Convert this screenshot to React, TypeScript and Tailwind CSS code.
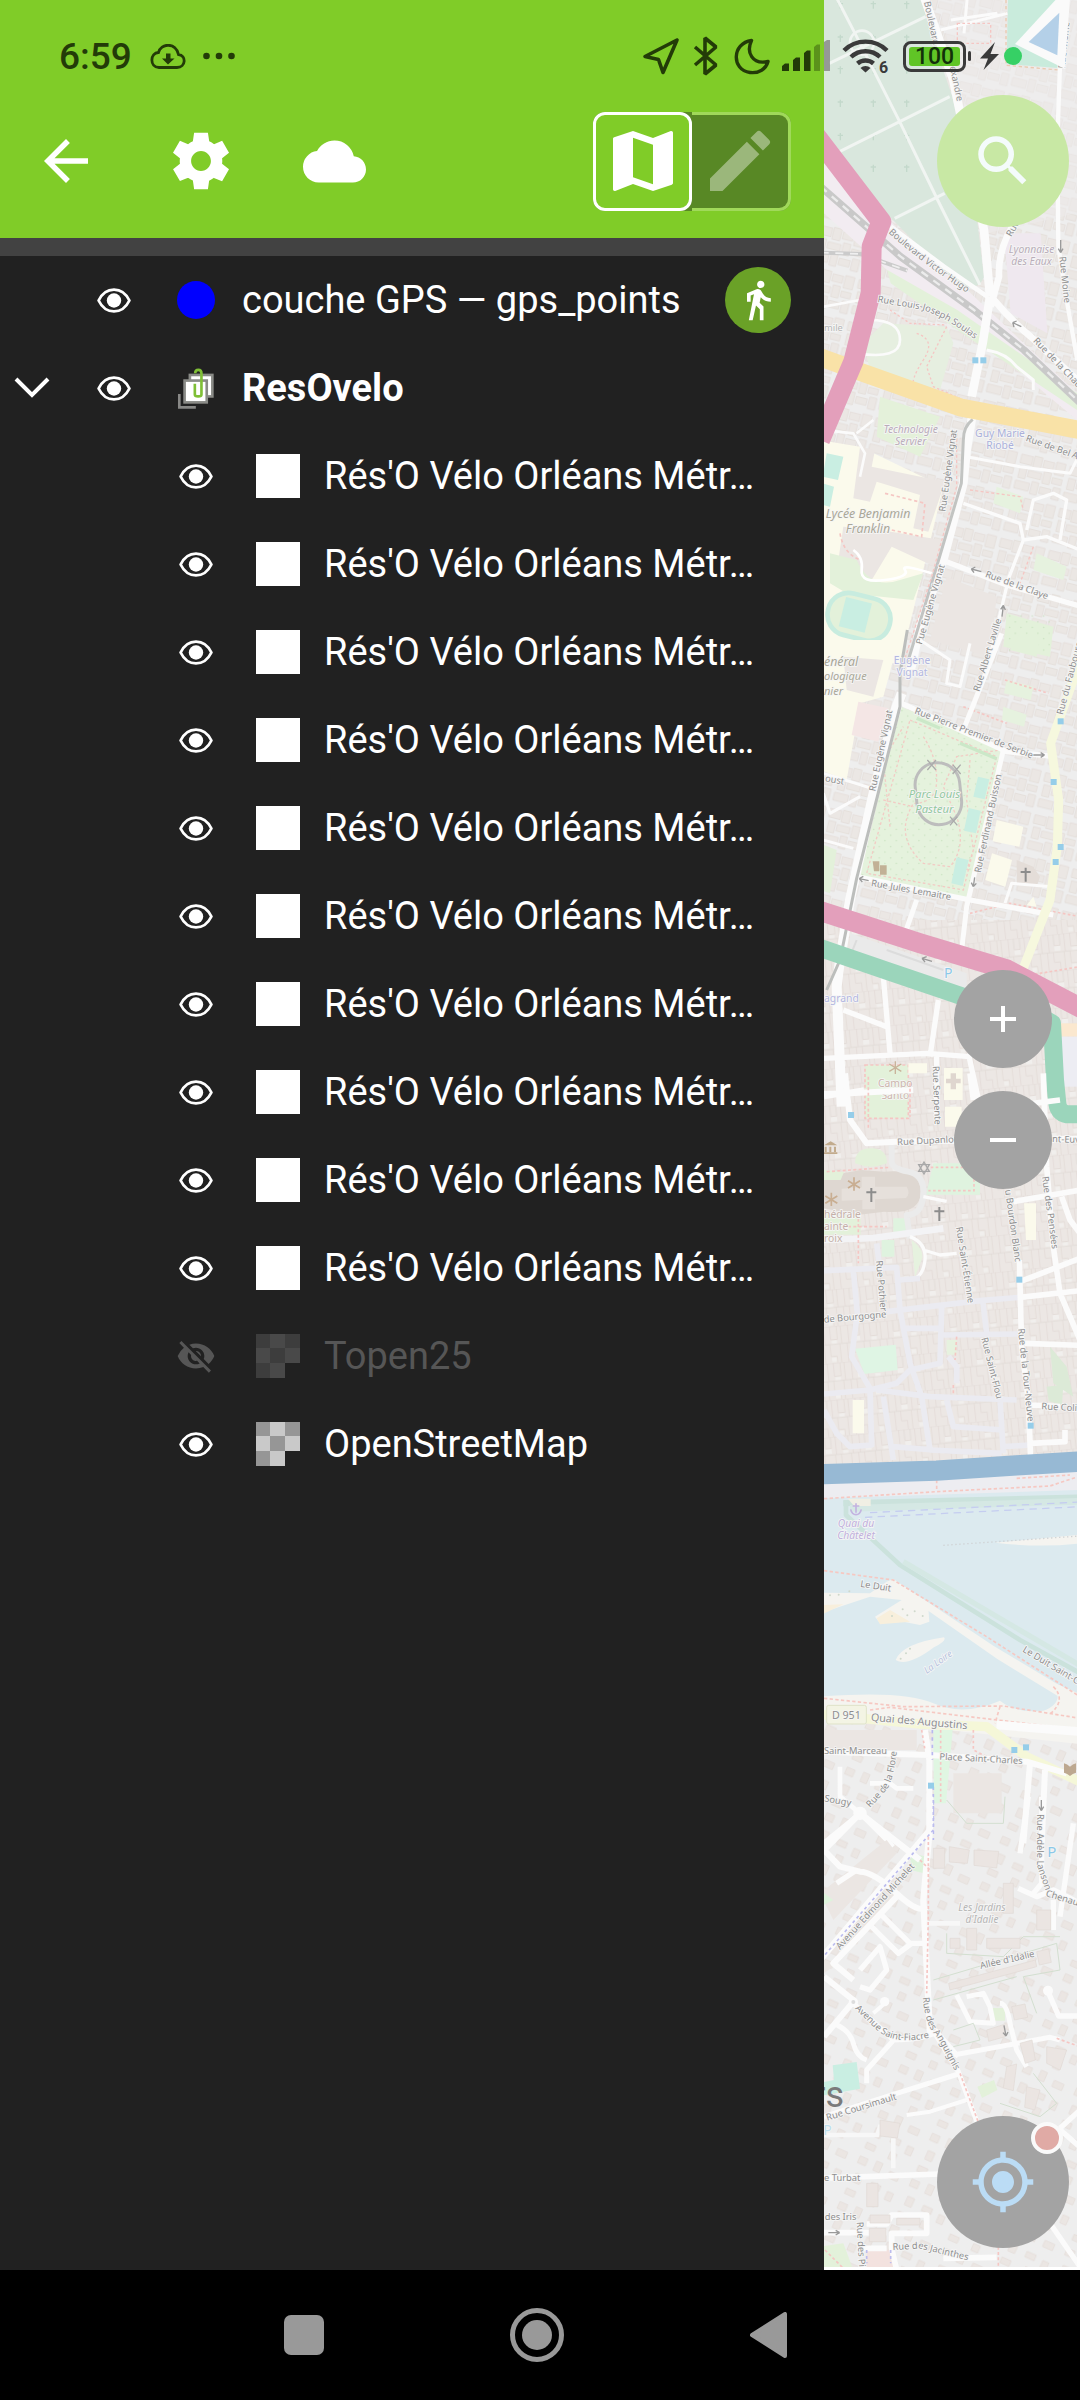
import React from "react";
import { MdArrowBack, MdCloud, MdMap, MdEdit, MdSearch, MdGpsFixed, MdDirectionsWalk, MdVisibilityOff } from "react-icons/md";

/* ---------- small icons ---------- */

function GearIcon() {
  return (
    <svg viewBox="0 0 24 24" className="size-[68px] fill-white" aria-hidden="true">
      <path d="M19.44 12.99l-.01.02c.04-.33.08-.67.08-1.01 0-.34-.03-.66-.07-.99l.01.02 2.44-1.92-2.43-4.22-2.87 1.16.01.01c-.52-.4-1.09-.74-1.71-1h.01L14.44 2H9.57l-.44 3.07h.01c-.62.26-1.19.6-1.71 1l.01-.01-2.88-1.17-2.44 4.22 2.44 1.92.01-.02c-.04.33-.07.65-.07.99 0 .34.03.68.08 1.01l-.01-.02-2.1 1.65-.33.26 2.43 4.2 2.88-1.15-.02-.04c.53.41 1.1.75 1.73 1.01h-.03L9.58 22h4.85s.03-.18.06-.42l.38-2.65h-.01c.62-.26 1.2-.6 1.73-1.01l-.02.04 2.88 1.15 2.43-4.2s-.14-.12-.33-.26l-2.11-1.66zM12 15.5c-1.93 0-3.5-1.57-3.5-3.5s1.57-3.5 3.5-3.5 3.5 1.57 3.5 3.5-1.57 3.5-3.5 3.5z" />
    </svg>
  );
}

function EyeIcon() {
  return (
    <svg viewBox="0 0 34 25" className="h-[25px] w-[34px]" aria-hidden="true">
      <path
        d="M1.6 12.5C5 5.500 10.500 1.600 17 1.600S29 5.500 32.400 12.500C29 19.500 23.500 23.400 17 23.400S5 19.500 1.600 12.500Z"
        fill="none"
        stroke="#fff"
        strokeWidth="2.8"
        strokeLinejoin="round"
      />
      <circle cx="17" cy="12.5" r="7.200" fill="#fff" />
    </svg>
  );
}

function GroupIcon() {
  return (
    <svg viewBox="525 405 115 130" className="h-[43px] w-[38px]" aria-hidden="true">
      <path d="M532 487v40h50" fill="none" stroke="#888886" strokeWidth="8" />
      <rect x="564" y="429" width="68" height="65" fill="#fff" stroke="#8a8b87" strokeWidth="8" />
      <rect x="548" y="446" width="67" height="66" fill="#fff" stroke="#8a8b87" strokeWidth="8" />
      <path
        d="M580 424c0-14 19-14 19 0v64c0 8-20 8-20 0v-32"
        fill="none"
        stroke="#7fbf36"
        strokeWidth="8"
      />
    </svg>
  );
}

function Checker({ dim }: { dim?: boolean }) {
  const dark = dim ? "#3d3d3d" : "#969696";
  const light = dim ? "#494949" : "#c9c9c9";
  return (
    <svg viewBox="0 0 44 44" className="size-11" aria-hidden="true">
      <path fill={dark} d="M0 0h14v14H0zM29 0h15v14H29zM14 14h15v15H14zM0 29h14v15H0z" />
      <path fill={light} d="M14 0h15v14H14zM0 14h14v15H0zM29 14h15v15H29zM14 29h15v15H14z" />
    </svg>
  );
}

/* ---------- status bar ---------- */

function StatusBar() {
  return (
    <div className="absolute inset-x-0 top-0 z-20 flex h-[112px] items-center pl-[59px] text-[#233b08]">
      <span className="text-[37px] leading-none font-medium">6:59</span>
      <svg viewBox="0 0 36 25" className="ml-[18px] h-[25px] w-9" aria-hidden="true">
        <path
          d="M9 23.500h18c9 0 9.500-12 1.500-13C26-2 10.500-1 8.500 8.500 0 9-.8 23 9 23.500Z"
          fill="none"
          stroke="currentColor"
          strokeWidth="2.800"
        />
        <path d="M16 9.500h4.500v5h4L18 20.500l-6-6h4z" fill="currentColor" />
      </svg>
      <svg viewBox="0 0 34 8" className="ml-4 h-2 w-[34px]" fill="currentColor" aria-hidden="true">
        <circle cx="4.500" cy="4" r="3.300" />
        <circle cx="17" cy="4" r="3.300" />
        <circle cx="29.500" cy="4" r="3.300" />
      </svg>
      <div className="ml-auto flex items-center pr-[58px]">
        <svg viewBox="0 0 38 38" className="size-[38px]" fill="none" stroke="currentColor" strokeWidth="3.600" strokeLinejoin="round" aria-hidden="true">
          <path d="M35 3 3 19.500l13.500 3 4.500 13z" />
        </svg>
        <svg viewBox="0 0 26 40" className="ml-[13px] h-10 w-[26px]" fill="none" stroke="currentColor" strokeWidth="3.600" strokeLinejoin="bevel" aria-hidden="true">
          <path d="M2 11l21 18-11 9V2l11 9L2 29" />
        </svg>
        <svg viewBox="0 0 36 37" className="ml-[15px] h-[37px] w-9" fill="none" stroke="currentColor" strokeWidth="3.400" strokeLinejoin="round" aria-hidden="true">
          <path d="M17.500 2.500C-2 5-3 32 16 34.500 25 35.500 32 31 34 23.500 18 27 12 14 17.500 2.500Z" />
        </svg>
        <svg viewBox="0 0 48 32" className="ml-3 h-8 w-12" aria-hidden="true">
          <path fill="currentColor" d="M0 26l3-2.500h4V31H0zM11 20l3-2.500h4V31h-7zM22 13l3-2.500h3.500V31H22z" />
          <path fill="currentColor" opacity=".4" d="M32 7l3-2.500h3V31h-6z" />
          <path fill="#777" opacity=".7" d="M42 2l3-2h3v31h-6z" />
        </svg>
        <svg viewBox="0 0 48 36" className="ml-3 h-9 w-12" fill="none" stroke="#3a3a3a" strokeWidth="4.400" aria-hidden="true">
          <path d="M2 12.500a30.500 30.500 0 0 1 43 0M9 19a21 21 0 0 1 29 0M15.500 25.500a12 12 0 0 1 16 0" />
          <path d="M18.500 30a7 7 0 0 1 10 0l-5 4.500z" fill="#3a3a3a" stroke="none" />
          <text x="37" y="35" fontSize="16" fontWeight="700" fill="#3a3a3a" stroke="none">6</text>
        </svg>
        <span className="ml-[13px] flex h-[31px] w-[63px] items-center justify-center rounded-lg border-[3px] border-[#3a3a3a] p-[3px]">
          <span className="flex h-full w-full items-center justify-center rounded-[3px] bg-[#60c526] text-[23px] leading-none font-medium text-[#12300a]">
            100
          </span>
        </span>
        <span className="ml-[2px] h-[10px] w-[3px] rounded-full bg-[#3a3a3a]" />
        <svg viewBox="0 0 20 28" className="ml-[8px] h-7 w-5" aria-hidden="true">
          <path d="M16 0 1 16.500h8L4.500 28 20 12h-8.500z" fill="#3a3a3a" />
        </svg>
        <span className="ml-[5px] size-[18px] rounded-full bg-[#36d065]" />
      </div>
    </div>
  );
}

/* ---------- layer drawer ---------- */

type Layer = {
  name: string;
  nested?: boolean;
  group?: boolean;
  hidden?: boolean;
  tracked?: boolean;
  symbol: "dot" | "group" | "square" | "raster";
};

const layers: Layer[] = [
  { name: "couche GPS — gps_points", symbol: "dot", tracked: true },
  { name: "ResOvelo", symbol: "group", group: true },
  ...Array.from({ length: 10 }, (): Layer => ({ name: "Rés'O Vélo Orléans Métr…", symbol: "square", nested: true })),
  { name: "Topen25", symbol: "raster", nested: true, hidden: true },
  { name: "OpenStreetMap", symbol: "raster", nested: true },
];

function LayerRow({ layer }: { layer: Layer }) {
  return (
    <li className={layer.nested ? "flex h-[88px] items-center pr-[33px] pl-[82px]" : "flex h-[88px] items-center pr-[33px]"}>
      <span className="mr-[18px] flex w-16 shrink-0 justify-center">
        {layer.group && (
          <button type="button" aria-label="Replier le groupe">
            <svg viewBox="0 0 36 22" className="h-[22px] w-9" fill="none" stroke="#fff" strokeWidth="4" aria-hidden="true">
              <path d="M2 2l16 16L34 2" />
            </svg>
          </button>
        )}
      </span>
      <button type="button" aria-label={"Visibilité " + layer.name} className="flex w-16 shrink-0 justify-center">
        {layer.hidden ? <MdVisibilityOff className="size-10 text-[#565656]" /> : <EyeIcon />}
      </button>
      <span className="ml-7 flex size-11 shrink-0 items-center justify-center">
        {layer.symbol === "dot" && <span className="size-[38px] rounded-full bg-[#0000ff]" />}
        {layer.symbol === "group" && <GroupIcon />}
        {layer.symbol === "square" && <span className="size-11 bg-white" />}
        {layer.symbol === "raster" && <Checker dim={layer.hidden} />}
      </span>
      <span
        className={
          layer.group
            ? "ml-6 min-w-0 flex-1 truncate text-[38px] leading-[48px] font-bold text-white"
            : layer.hidden
              ? "ml-6 min-w-0 flex-1 truncate text-[38px] leading-[48px] text-[#565656]"
              : "ml-6 min-w-0 flex-1 truncate text-[38px] leading-[48px] text-white"
        }
      >
        {layer.name}
      </span>
      {layer.tracked && (
        <button type="button" aria-label="Suivi de position" className="flex size-[66px] shrink-0 items-center justify-center rounded-full bg-[#6aa127]">
          <MdDirectionsWalk className="size-11 text-white" />
        </button>
      )}
    </li>
  );
}

function Drawer() {
  return (
    <aside className="flex min-w-0 flex-1 flex-col bg-[#212121]">
      <header className="bg-[#80cc28] pt-[84px]">
        <div className="flex h-[154px] items-center gap-[68px] pr-[33px] pl-[33px]">
          <button type="button" aria-label="Retour"><MdArrowBack className="size-[66px] text-white" /></button>
          <button type="button" aria-label="Paramètres"><GearIcon /></button>
          <button type="button" aria-label="Nuage"><MdCloud className="size-[63px] text-white" /></button>
          <div className="ml-auto flex h-[99px] w-[198px] rounded-xl bg-[#588825]">
            <button type="button" aria-label="Mode carte" aria-pressed="true" className="flex w-1/2 items-center justify-center rounded-xl border-[3px] border-white bg-[#80cc28]">
              <MdMap className="size-20 text-white" />
            </button>
            <button type="button" aria-label="Mode édition" aria-pressed="false" className="flex w-1/2 items-center justify-center rounded-r-xl border-y-[3px] border-r-[3px] border-[#a0d95a]">
              <MdEdit className="size-20 text-[#9bb77b]" />
            </button>
          </div>
        </div>
      </header>
      <div className="h-[18px] bg-[#424242]" />
      <ul>
        {layers.map((layer, i) => (
          <LayerRow key={i} layer={layer} />
        ))}
      </ul>
    </aside>
  );
}

/* ---------- map ---------- */

type RoadProps = { d: string; w?: number; c?: string; dash?: string; o?: number };
function Road({ d, w = 14, c = "#fbfbfb", dash, o }: RoadProps) {
  return <path d={d} fill="none" stroke={c} strokeWidth={w} strokeDasharray={dash} opacity={o} strokeLinejoin="round" />;
}

type LabelProps = { x: number; y: number; r?: number; c?: string; s?: number; i?: boolean; a?: "start" | "middle"; children: string };
function Label({ x, y, r = 0, c = "#8e8e8e", s = 28, i, a = "start", children }: LabelProps) {
  return (
    <text
      transform={`translate(${x} ${y}) rotate(${r})`}
      fontSize={s}
      fill={c}
      textAnchor={a}
      fontStyle={i ? "italic" : undefined}
      stroke="#f6f6f6"
      strokeWidth="5"
      paintOrder="stroke"
    >
      {children}
    </text>
  );
}

function CurvedLabel({ id, d, children }: { id: string; d: string; children: string }) {
  return (
    <>
      <path id={id} d={d} fill="none" />
      <text fontSize="28" fill="#8e8e8e" stroke="#f6f6f6" strokeWidth="5" paintOrder="stroke">
        <textPath href={"#" + id}>{children}</textPath>
      </text>
    </>
  );
}

function Stops({ at }: { at: number[][] }) {
  return (
    <>
      {at.map(([x, y]) => (
        <rect key={x + "-" + y} x={x - 9} y={y - 9} width="18" height="18" fill="#95cde9" />
      ))}
    </>
  );
}

function Church({ x, y }: { x: number; y: number }) {
  return <path d={`M${x} ${y - 21}v42M${x - 15} ${y - 8}h30`} stroke="#8c8c8c" strokeWidth="6" />;
}

const graves = [49, 148, 248].flatMap((x) => [15, 115, 210, 310, 410, 505].map((y) => [x, y]));

function CityMap() {
  const path = "#f5c6c3";
  return (
    <svg viewBox="0 0 759 6801" preserveAspectRatio="xMinYMin slice" className="absolute inset-0 h-full w-full font-['Noto_Sans',sans-serif]" aria-label="Carte d'Orléans">
      <defs>
        <pattern id="blocks" width="150" height="130" patternUnits="userSpaceOnUse" patternTransform="rotate(14)">
          <g fill="#ebe7e4" stroke="#e1dad5" strokeWidth="2">
            <path d="M6 8h36v26H6zM46 4h24v36H46zM76 10h32v22H76zM114 6h28v38h-28zM10 44h22v34H10zM38 50h40v20H38zM84 42h22v36H84zM112 54h30v18h-30zM6 88h44v24H6zM56 80h20v38H56zM82 90h34v20H82zM122 82h22v36h-22z" />
          </g>
        </pattern>
        <pattern id="dense" width="120" height="110" patternUnits="userSpaceOnUse" patternTransform="rotate(-6)">
          <rect width="120" height="110" fill="#ece7e4" />
          <g fill="none" stroke="#dfd8d3" strokeWidth="2">
            <path d="M0 0h120M0 54h120M14 0v54M30 0v34h18V0M62 0v54M80 0v40h20V0M112 0v54M8 54v56M26 54v30h18v26M58 54v56M76 54v36h18v20M106 54v56" />
          </g>
          <path d="M30 36h18v14H30zM82 42h16v10H82zM78 94h14v12H78z" fill="#f1efed" />
        </pattern>
        <pattern id="villas" width="170" height="150" patternUnits="userSpaceOnUse" patternTransform="rotate(24)">
          <path d="M10 14h26v22H10zM62 8h20v30H62zM110 20h32v20h-32zM20 66h22v28H20zM74 72h30v18H74zM128 78h20v26h-20zM12 118h30v18H12zM88 116h22v22H88z" fill="#ebe6e3" stroke="#e2dbd6" strokeWidth="2" />
        </pattern>
        <pattern id="dots" width="34" height="34" patternUnits="userSpaceOnUse">
          <circle cx="8" cy="8" r="2" fill="#c3dfba" />
          <circle cx="25" cy="24" r="2" fill="#c3dfba" />
        </pattern>
      </defs>

      <rect width="759" height="6801" fill="#eeeeee" />
      <rect width="759" height="2760" fill="url(#blocks)" />
      <rect y="2760" width="759" height="1640" fill="url(#dense)" />
      <rect y="5160" width="759" height="1641" fill="url(#villas)" />

      {/* cemetery and railway */}
      <g>
        <path d="M340 0h419v640l-270 60-80-420z" fill="#eeecec" opacity=".5" />
        <path d="M0 430 215 680 440 880 759 1180V1260L400 960 200 820 0 640z" fill="#f2ecf1" />
        <path d="M540 700h110l20 300-110-60z" fill="#efe8ef" />
        <path d="M0-10h290l40 140 55 160 55 230 18 130 22 180q-14 40-56 28l-60-40L212 665 0 430z" fill="#d9e7dd" />
        {graves.map(([x, y]) => (
          <path key={x + "-" + y} d={`M${x} ${y - 11}v22M${x - 8} ${y - 4}h16`} stroke="#c3d9cb" strokeWidth="4" />
        ))}
        <Road d="M36-10 93 100l134 265 114 235 127 255M36 460l191-95 150-75M16 190 305 50M212 655l150-75" w={9} c="#f1f5f2" />
        <circle cx="114" cy="128" r="36" fill="none" stroke="#f1f5f2" strokeWidth="8" />
        <path d="M552-10h180l-10 190-20 24-154-12z" fill="#c9ebdc" />
        <path d="M546 0v196l160 14" fill="none" stroke="#eac9b0" strokeWidth="4" strokeDasharray="10 8" />
        <Road d="M350 90l200-50M420 100l10-110M380 60l140-20" w={9} />
        <path d="M400 70h100v60H400z" fill="none" stroke={path} strokeWidth="4" strokeDasharray="8 7" />
        <path d="M190 810 400 930 759 1180v50L430 1010 200 850z" fill="#e3f1da" />
        <Road d="M-10 560 230 770 450 930 600 1050 770 1210" w={22} c="#c9c9c9" />
        <Road d="M-10 560 230 770 450 930 600 1050 770 1210" w={7} c="#ececec" dash="24 20" />
        <Road d="M-10 758 110 762 250 812" w={12} c="#cbcbcb" />
        <Road d="M-10 758 110 762 250 812" w={5} c="#efefef" dash="24 20" />
        <Road d="M300-10 388 240 480 690 498 890" w={26} />
        <Road d="M200 680 360 800 490 890" w={14} />
        <Road d="M640 590Q520 700 525 830L500 920M510 900Q560 960 620 1010L770 1150" w={20} />
        <Road d="M715 0 700 420 703 740 728 900 760 1080" w={13} />
        <Label x={300} y={6} r={78}>Boulevard</Label>
        <Label x={372} y={176} r={78}>Alexandre</Label>
        <Label x={722} y={206} r={-84}>Rue Moine</Label>
      </g>

      {/* parks and schools of the northern district */}
      <g transform="translate(-12 600)">
        <path d="M130 430l60-60 190 10 20 50-40 140-210-60z" fill="#e6efe0" />
        <path d="M210 330l60 40 110 5M290 400q60 20 20 80t-30 90M380 380l-60 120 20 60 90 40" fill="none" stroke={path} strokeWidth="4" strokeDasharray="7 7" />
        <path d="M180 590l180 60-60 120-130-60z" fill="#e4f1da" />
        <path d="M0 720l120 20 250 120-70 290-60 240H0z" fill="#fbfaec" />
        <path d="M120 740l45 10-10 50 220 45-50 150-45-10 20-100-130-40-20 60-50-10z" fill="#ebe6e3" />
        <path d="M70 980l110 10 185 30-20 80-130-60-60 100-100-60z" fill="#ebe6e3" />
        <path d="M30 1060l80 20q40 90 130 60l70-20-30 80-200-20-50-30z" fill="#e3f1da" />
        <path d="M195 880l120 30-10 100-90-20M60 1000q10 60 60 80" fill="none" stroke={path} strokeWidth="5" strokeDasharray="10 8" />
        <path d="M100 1050q30 20 25 60t70 30 60-30 80 10" fill="none" stroke="#fff" strokeWidth="8" />
        <g transform="rotate(14 115 1250)">
          <rect x="22" y="1186" width="190" height="128" rx="62" fill="#e3f1da" stroke="#c8ecdf" strokeWidth="14" />
          <rect x="65" y="1202" width="80" height="90" fill="#c9eee2" />
        </g>
        <path d="M20 760l50 10-16 70-46-10zM8 850l34 10-12 60-26-6z" fill="#c9eee2" />
        <path d="M560 1240l140 40-10 90-140-30z" fill="#e3f1da" />
        <rect x="560" y="1240" width="130" height="120" fill="url(#dots)" />
        <path d="M380 1130l150 60-20 180-180-50z" fill="#ebe6e3" />
        <path d="M530 860l80 30-10 50-80-30zM650 1060l90 40-10 40-90-30z" fill="#e6f2df" />
        <Road d="M10 320l110-20M110 460q130 20 130-40t-90-60" w={8} />
        <Road d="M10 690l90 10 35 60-15 70M160 660l-50 40" w={8} />
        <Road d="M380 1085l180 70 225 65" w={16} />
        <Road d="M560 1160l-50 210M610 1020l-50 130M430 910l170 60 10 50 70-10 100 40M620 990l20-90 60-20 40 20-20 120" w={10} />
        <Road d="M500 450q60 10 90 50l50 40v30M440 770l160 30 150 20 30-60" w={9} />
        <Road d="M510 290 488 430 455 590M458 640 440 750 430 850 370 1080 300 1280 270 1420" w={26} />
        <Road d="M458 658Q430 680 430 720L424 850 350 1100 262 1390" w={9} c="#c2c4c2" />
        <path d="M410 700v160L335 1130 250 1390" fill="none" stroke={path} strokeWidth="4" strokeDasharray="9 7" />
        <path d="M450 870l150 20 10 40M640 1040l-40 110" fill="none" stroke={path} strokeWidth="4" strokeDasharray="9 7" />
        <Road d="M-10 468 120 515 420 622 600 656 790 692" w={54} c="#f9e2a7" />
        <Stops at={[[466, 481], [490, 481]]} />
      </g>
      <Road d="M-30 400 172 665 143 740 140 880 88 1085-12 1320" w={60} c="#e39fbb" />
      <g transform="translate(-12 600)">
        <CurvedLabel id="hugo" d="M205 98Q300 185 450 285">Boulevard Victor Hugo</CurvedLabel>
        <CurvedLabel id="soulas" d="M172 306 300 328Q370 345 480 430">Rue Louis-Joseph Soulas</CurvedLabel>
        <Label x={12} y={394} c="#b5b5b5">mile</Label>
        <Label x={566} y={158} i c="#b9adb9" s={31}>Lyonnaise</Label>
        <Label x={574} y={194} i c="#b9adb9" s={31}>des Eaux</Label>
        <Label x={718} y={170} r={84}>Rue Moine</Label>
        <Label x={574} y={112} r={-60}>Rue</Label>
        <Label x={638} y={424} r={46}>Rue de la Chaude</Label>
        <Label x={272} y={698} a="middle" i c="#b9adb9" s={31}>Technologie</Label>
        <Label x={272} y={734} a="middle" i c="#b9adb9" s={31}>Servier</Label>
        <Label x={540} y={710} a="middle" c="#aab0da" s={31}>Guy Marie</Label>
        <Label x={540} y={746} a="middle" c="#aab0da" s={31}>Riobé</Label>
        <Label x={616} y={722} r={20}>Rue de Bel Air</Label>
        <Label x={376} y={936} r={-82}>Rue Eugène Vignat</Label>
        <Label x={144} y={955} a="middle" i c="#aaa898" s={37}>Lycée Benjamin</Label>
        <Label x={144} y={998} a="middle" i c="#aaa898" s={37}>Franklin</Label>
        <Label x={306} y={1335} r={-74}>Rue Eugène Vignat</Label>
        <Label x={494} y={1130} r={20}>Rue de la Claye</Label>
        <path d="M604 380l-26-12m0 0l12-5m-12 5l4 13M484 1115l-30-8m0 0l12-6m-12 6l8 11M546 1250l4-34m0 0l-8 12m8-12l6 14M722 120v38m0 0l-7-12m7 12l7-12" stroke="#9a9a9a" strokeWidth="4" fill="none" />
      </g>

      {/* park and inner boulevards */}
      <g transform="translate(-12 1920)">
        <path d="M0 0h190l40 20-40 150-70 20-40 230-80-30z" fill="#fbfaec" />
        <path d="M70 50l120 10-30 110-80-20z" fill="#ebe6e3" />
        <path d="M115 185l90 20-30 100-80-20z" fill="#f4e6e5" />
        <path d="M0 610l50 20-20 130-30-10z" fill="#e3f1da" />
        <path d="M243 200 548 328 440 772 118 712z" fill="#e5f2dd" />
        <path d="M243 200 548 328 440 772 118 712z" fill="url(#dots)" />
        <g fill="none" stroke="#f2cbc4" strokeWidth="4" strokeDasharray="8 7">
          <path d="M270 240l260 110-100 400-290-50zM310 290q40 60 40 130t-70 70q-60 100 30 180l80 10q50-60 20-150l-40-90 40-90 130-20M190 480l90 20M450 360l-10 120 20 150-20 60M210 560l-20-200 60-100" />
        </g>
        <g fill="none" stroke="#bdbdbd" strokeWidth="9">
          <rect x="288" y="368" width="134" height="186" rx="66" transform="rotate(-6 355 460)" />
        </g>
        <path d="M322 360l26 30m0-30l-26 30M398 374l24 28m0-28l-24 28M390 530l22 26m0-26l-22 26" stroke="#ababab" strokeWidth="4" />
        <path d="M474 410l34 8-14 60-34-8zM446 504l36 8-14 68-36-8zM410 652l36 8-18 78-34-8z" fill="#c9eee2" />
        <path d="M290 235l70 30M420 310l110 46" stroke="#cbe8c8" strokeWidth="10" />
        <path d="M530 540l80 20-12 60-80-16zM516 640l60 20-20 80-60-20zM640 770l10 30-30-4z" fill="#fbfaec" />
        <path d="M590 660l50 20 20 30-10 30-60-10z" fill="#e4ddd8" />
        <path d="M560 120l80 20-8 40-80-20z M550 200l70 24-8 36-66-20z" fill="#e6f2df" />
        <path d="M600-20l60 10-10 60-80-20z" fill="#e3f1da" />
        <Road d="M555 120l130 40M430 200l130 50M450 820l120-30 210 40M600 1010l180-30" w={5} c={path} dash="8 7" />
        <Road d="M245 190 420 270 560 335 690 348" w={16} />
        <Road d="M550 330 440 800 425 930M545-20 430 270M290 780 255 880" w={15} />
        <Road d="M120 712 450 780 700 825" w={16} />
        <Road d="M10 400l145 45M10 600l90 25M555 790l20-60 120 10M300 0l90 60-10 70 40 10 30-130M10 460l20 60 90-50" w={9} />
        <Road d="M245 160 230 200 165 440 90 780 60 960 50 1040 65 1400" w={30} />
        <Road d="M262-30 240 100V200L110 715 60 960 20 1050" w={9} c="#bcbebc" />
        <Road d="M792-20 760 120 692 310 716 480 712 620 690 780 600 1010" w={27} c="#f6f8de" />
        <path d="M90 880l350 120v60L90 960z" fill="#eaeaea" />
        <path d="M110 900l-20 50M200 930l170 60" stroke="#dcdcdc" strokeWidth="6" />
        <Road d="M70 1110 200 1160M190 1010l20 230M12 1255 320 1240 450 1250M355 1080 330 1250M445 1240 480 1400M12 1370l120-20M350 1250v180" w={16} />
        <path d="M135 1275h130v160H135z" fill="#e3f1da" stroke={path} strokeWidth="5" strokeDasharray="9 7" />
        <path d="M372 1284h56v96h-56zM265 1270h56v30h-56z" fill="#fbfaec" />
        <path d="M392 1300h16v16h14v14h-14v18h-16v-18h-14v-14h14z" fill="#dfd6cf" />
        <path d="M226 1264v38M208 1272l36 22M208 1294l36-22" stroke="#c9b39a" strokeWidth="4" />
        <path d="M720 1150h60v40h-60z" fill="#fbe8cf" />
        <path d="M720 1190h60v150h-60z" fill="#ededf3" />
        <Road d="M-10 920 200 992 430 1070 660 1130 696 1150 705 1320 712 1390Q716 1423 750 1423H790" w={54} c="#9bd5bb" />
        <Road d="M-10 810 300 910 560 988 790 1108" w={60} c="#e39fbb" />
        <Stops at={[[722, 244], [701, 426], [722, 621], [707, 666]]} />
        <Church x={617} y={704} />
        <g fill="#c2b196">
          <path d="M158 664h20v30h-16zM180 676h20v28h-20z" />
        </g>
        <Label x={12} y={77} i c="#aaa898" s={37}>énéral</Label>
        <Label x={12} y={120} i c="#aaa898" s={33}>ologique</Label>
        <Label x={12} y={164} i c="#aaa898" s={33}>nier</Label>
        <Label x={276} y={73} a="middle" c="#b3b7e0" s={31}>Eugène</Label>
        <Label x={276} y={109} a="middle" c="#b3b7e0" s={31}>Vignat</Label>
        <Label x={166} y={455} r={-78}>Rue Eugène Vignat</Label>
        <Label x={282} y={220} r={21}>Rue Pierre Premier de Serbie</Label>
        <Label x={478} y={156} r={-73}>Rue Albert Laville</Label>
        <Label x={482} y={700} r={-78}>Rue Ferdinand Buisson</Label>
        <Label x={728} y={226} r={-75}>Rue du Faubourg</Label>
        <Label x={343} y={474} a="middle" i c="#93c9a0" s={34}>Parc Louis</Label>
        <Label x={343} y={518} a="middle" i c="#93c9a0" s={34}>Pasteur</Label>
        <Label x={152} y={738} r={10}>Rue Jules Lemaitre</Label>
        <Label x={14} y={424} r={10}>oust</Label>
        <Label x={372} y={1014} c="#8cc8e8" s={42}>P</Label>
        <Label x={12} y={1087} c="#b3b7e0" s={31}>agrand</Label>
        <Label x={226} y={1341} a="middle" c="#cbb5ac" s={31}>Campo</Label>
        <Label x={226} y={1376} a="middle" c="#cbb5ac" s={31}>Santo</Label>
        <Label x={338} y={1278} r={88}>Rue Serpente</Label>
        <path d="M146 722l-28-6m0 0l12-7m-12 7l9 10M460 740l4-28m-4 28l-6-12m6 12l9-10M640 345h34m0 0l-12-7m12 7l-12 7M336 964l-30-9m0 0l14-5m-14 5l9 11" stroke="#9a9a9a" strokeWidth="4" fill="none" />
      </g>

      {/* cathedral district */}
      <g transform="translate(-12 3240)">
        <path d="M12 290l110-20 70 5q110-10 110 60t-110 60l-80 10-100-20z" fill="#ded7d1" />
        <path d="M65 326l60-4v-32h40v30l95 0q12 20-2 34l-93 4v30h-38v-28l-62 2z" fill="#e6e0db" />
        <path d="M105 250q0-45 48-45t48 45q-48 20-96 0zM12 270l60 6-10 24H12zM12 404h110v60H12z" fill="#e3f1da" />
        <path d="M340 250h140v94H318zM220 415h40v40h-40zM185 480h38v50h-38z" fill="#dff3df" />
        <path d="M332 262h130v70H325" fill="none" stroke={path} strokeWidth="5" strokeDasharray="8 7" />
        <path d="M375 80h50v60h-50zM612 370h36v110h-30zM98 960h34v100h-34z" fill="#fbfaec" />
        <path d="M105 806l122-12 6 76-100 12z" fill="#dff5e4" />
        <path d="M690 800l50 60 20 90-60-40zM680 920l50-6-4 60-40-10z" fill="#dcead7" />
        <path d="M380 780h30v44h-30zM275 480q40 30 30 60l-20 50z" fill="#e6f2df" />
        <Road d="M12 42 90 40 280 30M75-20 90 120 140 190 230 185 410 182 560 175M700 176h90" w={18} />
        <Road d="M215 195v50q0 20 50 30t45 70-50 60l10 70" w={18} c="#ebebeb" />
        <Road d="M12 480 160 474 370 445" w={20} c="#f3f3f5" />
        <Road d="M270 470q50 20 45 70t-40 60M310 510l50 15 50-5M310 350l70 14" w={10} />
        <g stroke="#ebebf1" strokeWidth="17" fill="none" strokeLinejoin="round">
          <path d="M12 572 230 562 240 690 270 850 305 950 330 1110 545 1120M100 570 112 700 95 830 150 925 155 1095 90 1100 50 1060 12 990M200 695 480 662 600 652M365 680 360 850 270 870 230 910 150 930 12 942M245 745 360 745M365 765 600 762M488 662 500 760M540 960 550 1120M170 930 330 950 590 960M190 950 220 1140M380 960 400 1040 550 1050M220 1100 340 1110M385 830 410 860V910M240 600 300 595M550 1100 630 1095" />
          <path d="M170 490 180 570" />
        </g>
        <Road d="M450-20 460 60M670-20 680 260 700 500 720 640 780 780M780 330 580 365M598 540 605 800 625 960 632 1140M600 605 780 535M600 652 780 632M615 790 780 796M725 350 750 420 780 460M632 975 720 980M632 1090 735 1085V1050M640 70l80-10" w={17} />
        <Road d="M20 275 210 262M115 400v150M145-10v160M270 10v100M20 440h180M400 915v30M410 770l-5 70" w={5} c={path} dash="9 7" />
        <path d="M312 246l16 28h-32zM312 282l-16-28h32z" fill="none" stroke="#a8a8a8" strokeWidth="4" />
        <Church x={154} y={345} />
        <Church x={358} y={402} />
        <path d="M102 292v40M84 302l36 22M84 324l36-22M34 338v40M16 348l36 22M16 370l36-22" stroke="#c9ae92" strokeWidth="5" />
        <path d="M12 196l20-12 20 12zM14 200h6v16h-6zM28 200h6v16h-6zM42 200h6v16h-6zM10 217h42v5H10z" fill="#c2ab8c" />
        <Stops at={[[93, 105], [598, 599], [632, 1037]]} />
        <Label x={232} y={196} r={-3}>Rue Dupanloup</Label>
        <Label x={696} y={186} r={2}>nt-Euverte</Label>
        <Label x={12} y={414} c="#c4b0a8" s={31}>hédrale</Label>
        <Label x={12} y={450} c="#c4b0a8" s={31}>ainte</Label>
        <Label x={12} y={486} c="#c4b0a8" s={31}>roix</Label>
        <Label x={408} y={442} r={81}>Rue Saint-Étienne</Label>
        <Label x={168} y={542} r={85}>Rue Pothier</Label>
        <Label x={555} y={330} r={82}>u Bourdon Blanc</Label>
        <Label x={666} y={290} r={82}>Rue des Pensées</Label>
        <Label x={12} y={728} r={-5}>de Bourgogne</Label>
        <Label x={484} y={775} r={76}>Rue Saint-Flou</Label>
        <Label x={594} y={746} r={84}>Rue de la Tour-Neuve</Label>
        <Label x={664} y={988} r={3}>Rue Coligny</Label>
      </g>

      {/* the Loire */}
      <g transform="translate(-12 4320)">
        <path d="M0 130 780 90V190L0 180z" fill="#ededf1" />
        <path d="M0 175 780 150V900L0 800z" fill="#dceaef" />
        <path d="M0 458 150 460 200 425 250 450 325 505 328 545 300 555 250 545 180 550 165 530 245 480 150 470 0 520z" fill="#f5f4f0" />
        <path d="M0 495l70-2L0 526zM170 535l40-25 60 35-90 8z" fill="#f8efdc" />
        <path d="M227 660q20-50 145-68 10 10-30 30-80 60-115 38zM525 308l255-24v26q-120 14-255-2zM200 425l20-8 300 200 250 150-8 90-90-20q60-10 40-70l-180-110z" fill="#f5f4f0" />
        <path d="M0 770q250-20 340 20t200-8q50 40 130 30 60-20 40-80l70 30v150L0 830z" fill="#f5f4f0" />
        <Road d="M70 190 780 172" w={18} c="#cbe2dc" />
        <Road d="M78 180V225L240 375 600 600 790 705" w={14} c="#cbe2dc" />
        <Road d="M90 205 780 184" w={20} c="#d5e8e4" />
        <Road d="M250 365 800 688" w={16} c="#d5e8e4" />
        <path d="M84 176h68v22h-50z" fill="#f0efe4" />
        <Road d="M135 232 780 200M150 218 780 186" w={4} c="#c5cdf0" dash="22 16" />
        <Road d="M370 316 780 288" w={4} c="#cfd2d4" dash="4 8" />
        <Road d="M12 176 350 155 690 138 780 108M12 392 220 420 500 590 780 770M12 775 250 800 550 798 780 835M150 810 210 802 700 860M540 800l-15 50M350 120v30M700 740q40 40-10 82M590 115l160-10" w={5} c="#f6c8c2" dash="10 7" />
        <path d="M108 190v28M98 198h20M92 208q4 16 16 16t16-16" fill="none" stroke="#c3b3e0" strokeWidth="5" />
        <g fill="#cfd8cb">
          <circle cx="30" cy="466" r="3" /><circle cx="56" cy="464" r="3" /><circle cx="88" cy="454" r="3" />
          <circle cx="248" cy="508" r="3" /><circle cx="284" cy="514" r="3" /><circle cx="262" cy="526" r="3" />
          <circle cx="308" cy="528" r="3" /><circle cx="216" cy="528" r="3" /><circle cx="270" cy="626" r="3" />
          <circle cx="242" cy="656" r="3" /><circle cx="258" cy="640" r="3" />
        </g>
        <Road d="M-10 103 350 92 590 76 790 64" w={61} c="#97b9d4" />
        <Label x={108} y={262} a="middle" i c="#bfb0dc" s={31}>Quai du</Label>
        <Label x={108} y={298} a="middle" i c="#bfb0dc" s={31}>Châtelet</Label>
        <Label x={120} y={440} r={9}>Le Duit</Label>
        <Label x={320} y={702} r={-36} i c="#b5c3de">La Loire</Label>
        <Label x={606} y={634} r={31}>Le Duit Saint-Charles</Label>

        {/* south bank */}
        <path d="M340 870h58l-20 220h-36z" fill="#e0f6e2" />
        <path d="M400 1000h145v120H400zM0 870h290v60H0z" fill="#ebe6e3" />
        <Road d="M530 855 780 875" w={26} />
        <Road d="M-10 822 300 852 500 860 620 950 790 1030" w={28} c="#f5f7d8" />
        <Road d="M10 935 330 945 620 965 740 1000M315 870 328 960V1200M630 970 610 1210M675 990 665 1210" w={18} />
        <Road d="M60 980v90l60 50L10 1210M120 1120l100 100M150 1030h60l20 15h50" w={14} />
        <circle cx="120" cy="1120" r="20" fill="#fbfbfb" />
        <circle cx="120" cy="1120" r="6" fill="#e2e2e2" />
        <Road d="M337 870V960M340 1040v160" w={5} c="#b8b8ef" dash="10 12" />
        <Road d="M362 870v220M305 870l10 60M460 870v60l60 30" w={5} c={path} dash="8 8" />
        <Stops at={[[583, 930], [618, 922], [333, 1037]]} />
        <path d="M732 970q10 2 18 10 8-8 18-10v28q-10 2-18 10-8-8-18-10z" fill="#bda890" />
        <rect x="20" y="796" width="119" height="56" rx="6" fill="#f3f4e4" stroke="#dfe3c8" strokeWidth="3" />
        <Label x={79} y={836} a="middle" s={32}>D 951</Label>
        <Label x={152} y={842} r={5} s={32}>Quai des Augustins</Label>
        <Label x={12} y={943}>Saint-Marceau</Label>
        <Label x={358} y={959} r={3}>Place Saint-Charles</Label>
        <CurvedLabel id="flore" d="M150 1104 200 1050Q226 1010 232 910">Rue de la Flore</CurvedLabel>
        <Label x={12} y={1084} r={10}>Sougy</Label>
      </g>

      {/* southern district */}
      <g transform="translate(-12 5400)">
        <path d="M0 280l200-160 30 40-190 200zM60 400l160-170 30 30-170 180zM0 480l40 20-30 20z" fill="#ebe6e3" />
        <path d="M272 160l50 10-10 50-40-10zM0 270l40 30-40 20z" fill="#def3dc" />
        <path d="M38 796l72-10 10 80-108 20v-40l30-6z" fill="#c9eee2" />
        <path d="M472 860l50-20 10 30-46 24zM515 624h40v38h-40z" fill="#e3f1da" />
        <path d="M0 1340l70-10 30 80H0z" fill="#e3f1da" />
        <path d="M140 1350h80v60h-80z" fill="#f3e2df" />
        <Road d="M12 150 120 40 300 180M330-10V80L310 300 330 700M330 90 0 480" w={19} />
        <Road d="M12 150 60 200 120 215Q160 215 230 280T320 320M230 290 40 490 100 540M100 600 12 530M100 605 12 710" w={18} />
        <Road d="M155 380l80 80 40-30h40M180 340l90 90M120 510l60-70 20 70-50 60-30-10M50 250l60-40" w={16} />
        <Road d="M40 670q50 20 60 60t40 50M140 850V810L230 710M100 610 220 720Q300 720 345 700L415 815 480 990M12 950 230 880 415 822M345 690l70 80M400 765 690 712 720 720M440 590l50-10 20 40 10 50-70-5-40-80M540 610q20 0 30 60l20 80 30 50" w={15} />
        <Road d="M160 640l40-35M260 945l70-10 110-35" w={12} />
        <circle cx="194" cy="605" r="14" fill="#fbfbfb" />
        <circle cx="684" cy="572" r="15" fill="#fbfbfb" />
        <circle cx="120" cy="40" r="18" fill="#fbfbfb" />
        <circle cx="100" cy="606" r="14" fill="#fbfbfb" />
        <circle cx="100" cy="606" r="6" fill="#ddd" />
        <Road d="M684 575 716 648H780M625-10 600 160M665-10V250L640 280M595 265 650 290 700 270 780 310M780 930 720 985M715 985 790 1050M690 1270 780 1400M700 300v90M760 70 720 350" w={16} />
        <Road d="M0 1135 360 1122M140 1272H200L215 1245H320V1300H215V1345L230 1410M0 1298H200M130 1345h70M370 1375 530 1372" w={17} />
        <Road d="M350 1122h90" w={17} />
        <Road d="M320 370h100M220 1015v90M12 1005h160l10-30" w={14} c="#f7f7f7" />
        <Road d="M340 0V90L10 470M140 1350v40M212 1350v40" w={5} c="#bcbcee" dash="9 9" />
        <Road d="M325 110V350L320 580M300 180l30 30M420 820l60 160M710 715l70 25M535 1340v60M15 1350l60 60" w={5} c={path} dash="9 7" />
        <path d="M340 540l370-110 10 80-110 20 40 110M340 600l250-70M640 820l70 90-50 40-60-20-60-20M400 690l60-20 20 50-80 20M380 0l60 70h110l5-80M380 400v60l170 10 60-60h110" fill="none" stroke="#d3dfd0" strokeWidth="3" />
        <g fill="#ebe5e2" stroke="#e1d9d4" strokeWidth="2">
          <path d="M340 145h34v60h-34zM388 140l60 10-6 40-54-4zM462 150l74 4-6 50-68-8zM550 250h30v90h-30zM390 415h30v30h-30zM440 385h30v65h-30zM500 415h100v30H500zM386 550l260-70 4 20-260 70zM650 455l36-8 8 40-36 8zM650 330h42v60h-42zM500 690l50-16 6 36-50 14zM575 620l40-8 8 40-40 8zM600 730l36-10 10 60-30 10zM560 800l30-8-10 80-30-8zM620 860l40 10-16 60-30-8zM180 960l60 10-8 44-52-6zM140 1150h34v70h-34zM150 1245h60v24h-60zM230 1255h70v20h-70zM680 740l60 10-20 60-40-20zM148 1285h50v40h-50z" />
        </g>
        <CurvedLabel id="michelet" d="M60 450 300 184">Avenue Edmond Michelet</CurvedLabel>
        <CurvedLabel id="fiacre" d="M104 626 160 680Q220 745 350 707">Avenue Saint-Fiacre</CurvedLabel>
        <CurvedLabel id="anguignis" d="M308 592Q316 680 350 710L420 840">Rue des Anguignis</CurvedLabel>
        <CurvedLabel id="jacinthes" d="M218 1350 300 1346 480 1390">Rue des Jacinthes</CurvedLabel>
        <CurvedLabel id="lanson" d="M652 42 652 200 700 340">Rue Adèle Lanson</CurvedLabel>
        <Label x={676} y={288} r={17}>Chenault</Label>
        <Label x={682} y={172} c="#8cc8e8" s={45}>P</Label>
        <Label x={486} y={332} a="middle" i c="#b5b5b5" s={30}>Les Jardins</Label>
        <Label x={486} y={368} a="middle" i c="#b5b5b5" s={30}>d'Idalie</Label>
        <Label x={482} y={507} r={-13}>Allée d'Idalie</Label>
        <Label x={22} y={962} r={-17}>Rue Coursimault</Label>
        <Label x={10} y={1004} c="#bddfee" s={42}>P</Label>
        <Label x={12} y={1142}>e Turbat</Label>
        <Label x={14} y={1261}>des Iris</Label>
        <Label x={110} y={1266} r={87}>Rue des Pins</Label>
        <path d="M25 1298h34m0 0l-12-7m12 7l-12 7M552 676l6 32m0 0l-9-10m9 10l6-12M664 0v32m0 0l-7-12m7 12l7-12" stroke="#9a9a9a" strokeWidth="4" fill="none" />
      </g>

      {/* current position marker */}
      <path d="M573 132 722-30H740L722 206z" fill="#fafafa" />
      <path d="M614 126 706 38 700 166z" fill="#b4d0e8" />
    </svg>
  );
}

function MapPane() {
  return (
    <section className="relative w-64 shrink-0 overflow-hidden border-r-[3px] border-b-[3px] border-white bg-[#eee]">
      <CityMap />
      <span className="absolute bottom-[152px] left-0 flex w-5 justify-end overflow-hidden text-[36px] leading-[40px] text-[#7a7a7a]">rs</span>
      <button type="button" aria-label="Rechercher" className="absolute top-[95px] right-2 flex size-[132px] items-center justify-center rounded-full bg-[#c8e8a4]">
        <MdSearch className="size-[66px] text-[#f4fbfb]" />
      </button>
      <div className="absolute top-[970px] right-[25px] flex flex-col gap-[23px]">
        <button type="button" aria-label="Zoom avant" className="flex size-[98px] items-center justify-center rounded-full bg-[#a3a3a3]">
          <svg viewBox="0 0 26 26" className="size-[26px]" stroke="#fff" strokeWidth="4" aria-hidden="true"><path d="M0 13h26M13 0v26" /></svg>
        </button>
        <button type="button" aria-label="Zoom arrière" className="flex size-[98px] items-center justify-center rounded-full bg-[#a3a3a3]">
          <svg viewBox="0 0 26 26" className="size-[26px]" stroke="#fff" strokeWidth="4" aria-hidden="true"><path d="M0 13h26" /></svg>
        </button>
      </div>
      <button type="button" aria-label="Ma position" className="absolute right-2 bottom-[19px] flex size-[132px] items-center justify-center rounded-full bg-[#a3a3a3]">
        <MdGpsFixed className="size-[66px] text-[#bbdcf5]" />
        <span className="absolute top-[6px] right-[6px] size-8 rounded-full border-4 border-[#fafafa] bg-[#e0aaa5]" />
      </button>
    </section>
  );
}

function SystemNav() {
  return (
    <nav className="flex h-[130px] items-center bg-black pr-[10px]" aria-label="Navigation système">
      <div className="mx-auto flex items-center gap-[186px]">
        <button type="button" aria-label="Applications récentes" className="size-10 rounded-[7px] bg-[#999]" />
        <button type="button" aria-label="Accueil" className="flex size-[54px] items-center justify-center rounded-full border-[5px] border-[#999]">
          <span className="size-[30px] rounded-full bg-[#999]" />
        </button>
        <button type="button" aria-label="Précédent">
          <svg viewBox="0 0 37 46" className="h-[46px] w-[37px]" aria-hidden="true">
            <path d="M35 2v42L2 23z" fill="#999" stroke="#999" strokeWidth="4" strokeLinejoin="round" />
          </svg>
        </button>
      </div>
    </nav>
  );
}

export default function App() {
  return (
    <div className="relative flex min-h-screen flex-col font-['Roboto',sans-serif]">
      <StatusBar />
      <main className="flex flex-1">
        <Drawer />
        <MapPane />
      </main>
      <SystemNav />
    </div>
  );
}
